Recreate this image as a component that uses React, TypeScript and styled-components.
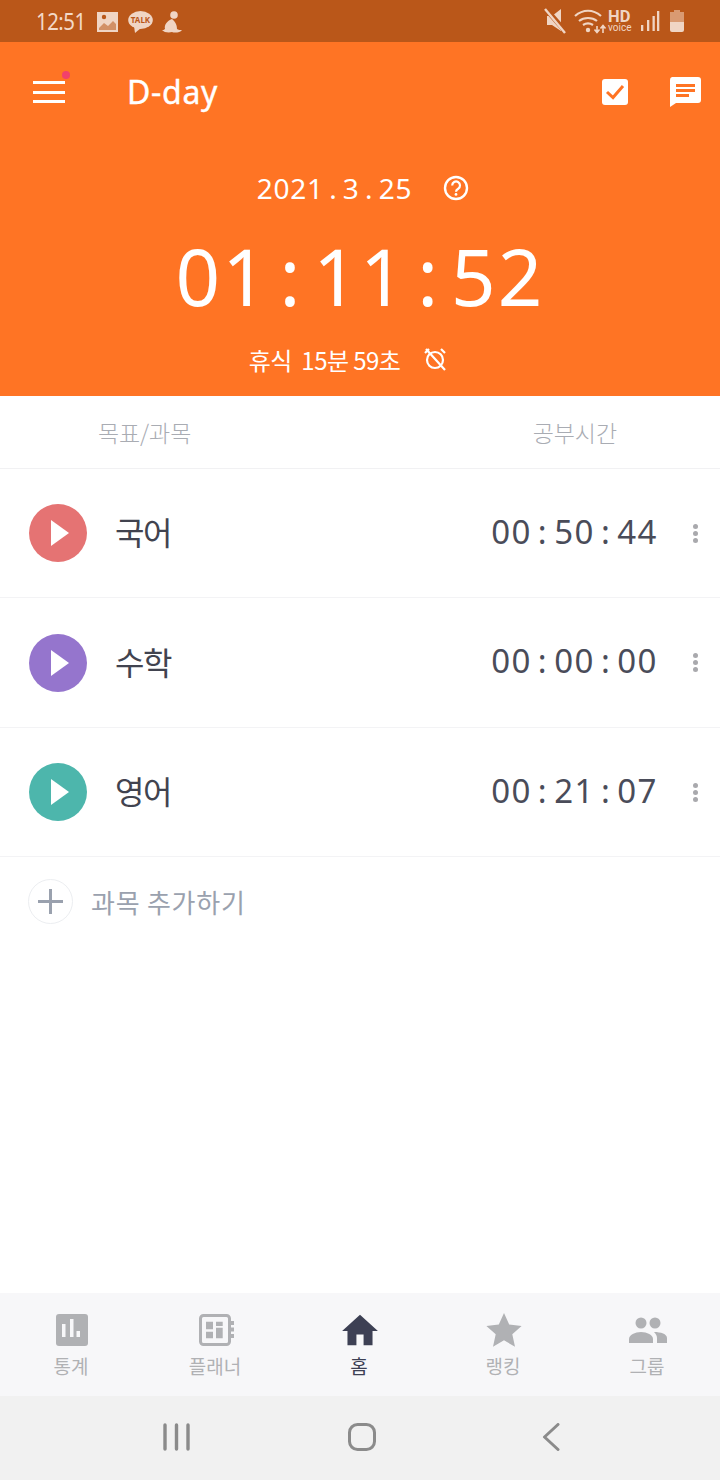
import React from 'react'
import styled, { createGlobalStyle } from 'styled-components'

const GlobalStyle = createGlobalStyle`
  html, body {
    margin: 0;
    padding: 0;
    background: #fff;
    font-family: "Noto Sans", "Noto Sans CJK KR", sans-serif;
  }
  * { box-sizing: border-box; }
`

const Page = styled.div`
  width: 720px;
  height: 1480px;
  display: flex;
  flex-direction: column;
  overflow: hidden;
`

const StatusBar = styled.div`
  height: 42px;
  flex: none;
  background: #ba5719;
  color: #f3d9c8;
  display: flex;
  align-items: center;
  justify-content: space-between;
  padding: 0 35px 0 36px;
`

const StatusGroup = styled.div`
  display: flex;
  align-items: center;
`

const StatusTime = styled.span`
  font-family: "Noto Sans", sans-serif;
  font-size: 24px;
  line-height: 42px;
  letter-spacing: -0.6px;
  transform: scaleX(0.85);
  transform-origin: left center;
  width: 61px;
`

const Hero = styled.div`
  height: 354px;
  flex: none;
  background: #ff7424;
  color: #fff;
  display: flex;
  flex-direction: column;
`

const TopRow = styled.div`
  height: 100px;
  display: flex;
  align-items: center;
  padding: 0 19px 0 33px;
`

const Menu = styled.div`
  position: relative;
  width: 32px;
  height: 22px;
  margin-right: 62px;
  display: flex;
  flex-direction: column;
  justify-content: space-between;
  span {
    display: block;
    height: 3px;
    background: #fff;
  }
`

const MenuDot = styled.i`
  position: absolute;
  top: -10px;
  right: -5px;
  width: 8px;
  height: 8px;
  border-radius: 50%;
  background: #f2416b;
`

const Title = styled.h1`
  margin: 0;
  flex: 1;
  font-size: 32px;
  font-weight: 400;
  line-height: 44px;
  letter-spacing: 0.7px;
  -webkit-text-stroke: 0.4px #fff;
`

const TopIcons = styled.div`
  display: flex;
  align-items: center;
  gap: 40px;
`

const DateRow = styled.div`
  height: 34px;
  margin-top: 29px;
  display: flex;
  justify-content: center;
  align-items: center;
  gap: 31px;
  font-size: 28px;
  letter-spacing: 0.7px;
  word-spacing: -2.5px;
  white-space: pre;
  padding-left: 6px;
`

const Clock = styled.div`
  margin-top: 22px;
  height: 98px;
  display: flex;
  justify-content: center;
  align-items: center;
  font-size: 78px;
  line-height: 98px;
  letter-spacing: 2.2px;
  word-spacing: -12px;
  white-space: pre;
`

const RestRow = styled.div`
  margin-top: 17px;
  height: 34px;
  display: flex;
  justify-content: center;
  align-items: center;
  font-size: 24px;
  gap: 23px;
  padding-right: 24px;
  font-family: "Noto Sans CJK KR", sans-serif;
  span {
    letter-spacing: -0.55px;
    white-space: pre;
  }
`

const ColumnHead = styled.div`
  height: 73px;
  flex: none;
  display: flex;
  align-items: center;
  justify-content: space-between;
  border-bottom: 1px solid #f1f1f3;
  padding: 0 103px 0 98px;
  font-family: "Noto Sans CJK KR", sans-serif;
  font-size: 23px;
  font-weight: 300;
  color: #a9acb3;
  letter-spacing: -0.1px;
`

const SubjectRow = styled.div<{ $tall?: boolean }>`
  height: ${p => (p.$tall ? 130 : 129)}px;
  flex: none;
  display: flex;
  align-items: center;
  padding: 0 22px 0 29px;
  border-bottom: 1px solid #f3f3f5;
`

const PlayButton = styled.div<{ $color: string }>`
  width: 58px;
  height: 58px;
  border-radius: 50%;
  background: ${p => p.$color};
  display: flex;
  align-items: center;
  justify-content: center;
  flex: none;
  margin-right: 29px;
  padding-left: 4px;
`

const SubjectName = styled.div`
  flex: 1;
  margin-left: -1px;
  padding-bottom: 4px;
  font-family: "Noto Sans CJK KR", sans-serif;
  font-size: 32px;
  color: #41434f;
  letter-spacing: -1.5px;
`

const SubjectTime = styled.div`
  padding-bottom: 4px;
  font-size: 33px;
  color: #4a4c59;
  letter-spacing: 1.5px;
  word-spacing: -4.1px;
  white-space: pre;
  margin-right: 35px;
`

const Dots = styled.div`
  display: flex;
  flex-direction: column;
  gap: 2px;
  i {
    width: 5px;
    height: 5px;
    border-radius: 50%;
    background: #a9a9ad;
  }
`

const AddRow = styled.div`
  height: 91px;
  flex: none;
  display: flex;
  align-items: center;
  padding: 0 0 3px 28px;
  gap: 18px;
  font-family: "Noto Sans CJK KR", sans-serif;
  font-size: 26px;
  letter-spacing: 0.75px;
  color: #9aa1ae;
`

const AddCircle = styled.div`
  width: 45px;
  height: 45px;
  border-radius: 50%;
  border: 1px solid #eceef1;
  display: flex;
  align-items: center;
  justify-content: center;
`

const Spacer = styled.div`
  flex: 1;
`

const TabBar = styled.div`
  height: 103px;
  flex: none;
  background: #f7f7f9;
  display: grid;
  grid-template-columns: repeat(5, 144px);
`

const Tab = styled.div<{ $active?: boolean }>`
  display: flex;
  flex-direction: column;
  align-items: center;
  padding-top: 20px;
  font-family: "Noto Sans CJK KR", sans-serif;
  font-size: 19px;
  line-height: 28px;
  color: ${p => (p.$active ? '#3d4054' : '#b0b1b4')};
  svg {
    display: block;
  }
`

const TabLabel = styled.span`
  margin: 5px 2px 0 0;
`

const SystemBar = styled.div`
  height: 84px;
  flex: none;
  background: #f1f1f1;
  display: grid;
  grid-template-columns: 185px 194px 20px;
  padding-left: 163px;
  align-items: center;
  padding-bottom: 2px;
`

const PlayIcon = () => (
  <svg width="20" height="28" viewBox="0 0 20 28">
    <path d="M1 1 L19 14 L1 27 Z" fill="#fff" />
  </svg>
)

const subjects = [
  { name: '국어', time: '00 : 50 : 44', color: '#e57373' },
  { name: '수학', time: '00 : 00 : 00', color: '#9575cd', tall: true },
  { name: '영어', time: '00 : 21 : 07', color: '#4db6ac' },
]

export default function App() {
  return (
    <Page>
      <GlobalStyle />
      <StatusBar>
        <StatusGroup>
          <StatusTime>12:51</StatusTime>
          <svg width="100" height="30" viewBox="0 0 100 30">
            <path d="M0 6h21v20H0z" fill="#f0d5c4" />
            <path d="M2 22l5-5 4 3 5-5 3 3v6H2z" fill="#ba5719" opacity="0.55" />
            <circle cx="7" cy="11" r="2.200" fill="#ba5719" />
            <ellipse cx="43.500" cy="14" rx="12.300" ry="9" fill="#f0d5c4" />
            <path d="M37 20l1 7 6-5z" fill="#f0d5c4" />
            <text x="43.500" y="17" fontSize="8" fontWeight="700" textAnchor="middle" fill="#ba5719" fontFamily="Noto Sans">TALK</text>
            <circle cx="77" cy="9" r="3.800" fill="#f0d5c4" />
            <path d="M75 13c-5 2-8 6-7 10-1 1-2 1-3 1 2 2.500 7 3 10 2 2 1 8 1 10-2-1.500 0-4 0-5-1 0-3-1-7-5-10z" fill="#f0d5c4" />
          </svg>
        </StatusGroup>
        <svg width="154" height="32" viewBox="0 0 154 32">
          <path d="M16 11h5l9-7v22l-9-6h-5z" fill="#f0d5c4" />
          <path d="M14 3l21 24" stroke="#ba5719" strokeWidth="5" />
          <path d="M14 4l20 24" stroke="#f0d5c4" strokeWidth="2.400" />
          <path d="M44 11c8-7 18-7 26 0M48 16c5-4 13-4 18 0M52 20c3-2 7-2 10 0" fill="none" stroke="#f0d5c4" strokeWidth="2.200" />
          <circle cx="57" cy="25" r="2.200" fill="#f0d5c4" />
          <path d="M66 21v6M63.500 24.500l2.500 3 2.500-3M72 28v-7M69.500 23.500l2.500-3 2.500 3" fill="none" stroke="#f0d5c4" strokeWidth="1.600" />
          <text x="77" y="17" fontSize="16.500" fontWeight="700" fill="#f0d5c4" fontFamily="Roboto">HD</text>
          <text x="77" y="26" fontSize="10" fill="#f0d5c4" fontFamily="Roboto">voice</text>
          <path d="M110 20h2.300v6H110zM116 15h2.300v11H116zM121.500 11h2.300v15h-2.300zM126 6h2.300v20H126z" fill="#f0d5c4" />
          <path d="M139 7h4V5h6v2h4v10h-14z" fill="#d99a72" />
          <path d="M139 17h14v8a2 2 0 0 1-2 2h-10a2 2 0 0 1-2-2z" fill="#f0d5c4" />
        </svg>
      </StatusBar>

      <Hero>
        <TopRow>
          <Menu>
            <span />
            <span />
            <span />
            <MenuDot />
          </Menu>
          <Title>D-day</Title>
          <TopIcons>
            <svg width="28" height="28" viewBox="0 0 28 28">
              <rect x="1" y="1" width="26" height="26" rx="3" fill="#fff" />
              <path d="M6 14l6 5.500L22 8" fill="none" stroke="#ff7424" strokeWidth="3" />
            </svg>
            <svg width="32" height="30" viewBox="0 0 32 30">
              <path d="M3 0h26a3 3 0 0 1 3 3v20a3 3 0 0 1-3 3H7l-6 4V3a3 3 0 0 1 2-3z" fill="#fff" />
              <path d="M7 7h19v3H7zM7 12h19v3H7zM7 17h13v3H7z" fill="#ff7424" />
            </svg>
          </TopIcons>
        </TopRow>
        <DateRow>
          <span>2021 . 3 . 25</span>
          <svg width="26" height="26" viewBox="0 0 26 26">
            <circle cx="13" cy="13" r="11" fill="none" stroke="#fff" strokeWidth="2.400" />
            <path d="M9.200 10.400a3.900 3.900 0 1 1 6 3.300c-1.400.9-2.200 1.500-2.200 3" fill="none" stroke="#fff" strokeWidth="2.200" />
            <circle cx="13" cy="19.400" r="1.400" fill="#fff" />
          </svg>
        </DateRow>
        <Clock>01 : 11 : 52</Clock>
        <RestRow>
          <span>휴식  15분 59초</span>
          <svg width="24" height="24" viewBox="0 0 24 24">
            <circle cx="12" cy="13" r="8" fill="none" stroke="#fff" strokeWidth="2.200" />
            <path d="M2 6l4-4M22 6l-4-4M3 2l19 21" fill="none" stroke="#fff" strokeWidth="2.200" />
          </svg>
        </RestRow>
      </Hero>

      <ColumnHead>
        <span>목표/과목</span>
        <span>공부시간</span>
      </ColumnHead>

      {subjects.map(s => (
        <SubjectRow key={s.name} $tall={s.tall}>
          <PlayButton $color={s.color}>
            <PlayIcon />
          </PlayButton>
          <SubjectName>{s.name}</SubjectName>
          <SubjectTime>{s.time}</SubjectTime>
          <Dots>
            <i />
            <i />
            <i />
          </Dots>
        </SubjectRow>
      ))}

      <AddRow>
        <AddCircle>
          <svg width="25" height="25" viewBox="0 0 25 25">
            <path d="M0 12.500h25M12.500 0v25" stroke="#9aa1ae" strokeWidth="3" />
          </svg>
        </AddCircle>
        과목 추가하기
      </AddRow>

      <Spacer />

      <TabBar>
        <Tab>
          <svg width="34" height="34" viewBox="0 0 34 34">
            <rect x="1" y="1" width="32" height="32" rx="3" fill="#b0b1b4" />
            <path d="M7 11h3.500v13H7zM15 6h3.500v18H15zM21.500 18H25v6h-3.500z" fill="#f7f7f9" />
          </svg>
          <TabLabel>통계</TabLabel>
        </Tab>
        <Tab>
          <svg width="36" height="34" viewBox="0 0 36 34">
            <rect x="2.500" y="2.500" width="29" height="29" rx="3" fill="none" stroke="#b0b1b4" strokeWidth="3" />
            <path d="M8 8.700h7v7.600H8zM18 8.700h6.700V13H18zM18 14.700h6.700v10.600H18zM8 18.700h7v6.600H8z" fill="#b0b1b4" />
            <path d="M33 8h3v4h-3zM33 14.500h3v4h-3zM33 21h3v4h-3z" fill="#b0b1b4" />
          </svg>
          <TabLabel>플래너</TabLabel>
        </Tab>
        <Tab $active>
          <svg width="36" height="34" viewBox="2 2 20 19">
            <path d="M10 20v-6h4v6h5v-8h3L12 3 2 12h3v8z" fill="#3d4054" />
          </svg>
          <TabLabel>홈</TabLabel>
        </Tab>
        <Tab>
          <svg width="36" height="34" viewBox="0 0 36 34">
            <path d="M18 0l5.200 11.600 12.400 1.300-9.300 8.400 2.700 12.400L18 27.300 7 33.700l2.700-12.400L.4 12.900l12.400-1.300z" fill="#b0b1b4" />
          </svg>
          <TabLabel>랭킹</TabLabel>
        </Tab>
        <Tab>
          <svg width="40" height="34" viewBox="0 0 40 34">
            <circle cx="13" cy="10" r="5.500" fill="#b0b1b4" />
            <circle cx="27" cy="10" r="5.500" fill="#b0b1b4" />
            <path d="M1 30v-4c0-4 6-7 12-7s12 3 12 7v4z" fill="#b0b1b4" />
            <path d="M29 30v-5c0-2-1-4-3-6 7 0 13 2 13 6v5z" fill="#b0b1b4" />
          </svg>
          <TabLabel>그룹</TabLabel>
        </Tab>
      </TabBar>

      <SystemBar>
        <svg width="28" height="28" viewBox="0 0 28 28">
          <path d="M2 2v24M13.500 2v24M25 2v24" stroke="#8b8b8b" strokeWidth="3.400" strokeLinecap="round" />
        </svg>
        <svg width="28" height="28" viewBox="0 0 28 28">
          <rect x="1.500" y="1.500" width="25" height="25" rx="8" fill="none" stroke="#8b8b8b" strokeWidth="3" />
        </svg>
        <svg width="18" height="28" viewBox="0 0 18 28">
          <path d="M16 1.500L2.500 14 16 26.500" fill="none" stroke="#8b8b8b" strokeWidth="3" strokeLinecap="round" strokeLinejoin="round" />
        </svg>
      </SystemBar>
    </Page>
  )
}
